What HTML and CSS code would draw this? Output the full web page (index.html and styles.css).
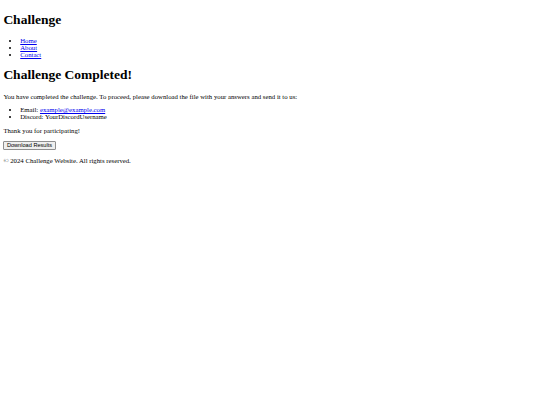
FILE: index.html
```html
<!DOCTYPE html>
<html lang="en">
<head>
<meta charset="utf-8">
<title>Challenge</title>
<link rel="stylesheet" href="styles.css">
</head>
<body class="page">
<header class="site-header">
  <h1 class="title">Challenge</h1>
  <nav class="site-nav">
    <ul class="list">
      <li><a class="link" href="#">Home</a></li>
      <li><a class="link" href="#">About</a></li>
      <li><a class="link" href="#">Contact</a></li>
    </ul>
  </nav>
</header>
<main class="content">
  <h1 class="title">Challenge Completed!</h1>
  <p class="text">You have completed the challenge. To proceed, please download the file with your answers and send it to us:</p>
  <ul class="list">
    <li>Email: <a class="link" href="#">example@example.com</a></li>
    <li>Discord: YourDiscordUsername</li>
  </ul>
  <p class="text">Thank you for participating!</p>
  <button class="download-btn" type="button">Download Results</button>
</main>
<footer class="site-footer">
  <p class="text">&copy; 2024 Challenge Website. All rights reserved.</p>
</footer>
</body>
</html>
```
FILE: styles.css
```css
html {
  background: #fff;
}
.page {
  margin: 3.375px;
  font-family: "Liberation Serif", "Times New Roman", serif;
  font-size: 6.75px;
  color: #000;
}
.title {
  font-size: 13.5px;
  font-weight: bold;
  margin: 9.045px 0;
}
.text {
  margin: 6.75px 0;
}
.list {
  margin: 6.75px 0;
  padding-left: 16.875px;
  list-style: disc;
}
.link {
  color: #0000ee;
}
.download-btn {
  font-family: "Liberation Sans", Arial, sans-serif;
  font-size: 5.625px;
  padding: 0.5px 2.5px;
  background: #efefef;
  border: 1px solid #8f8f8f;
  border-radius: 1px;
  color: #000;
}
```
